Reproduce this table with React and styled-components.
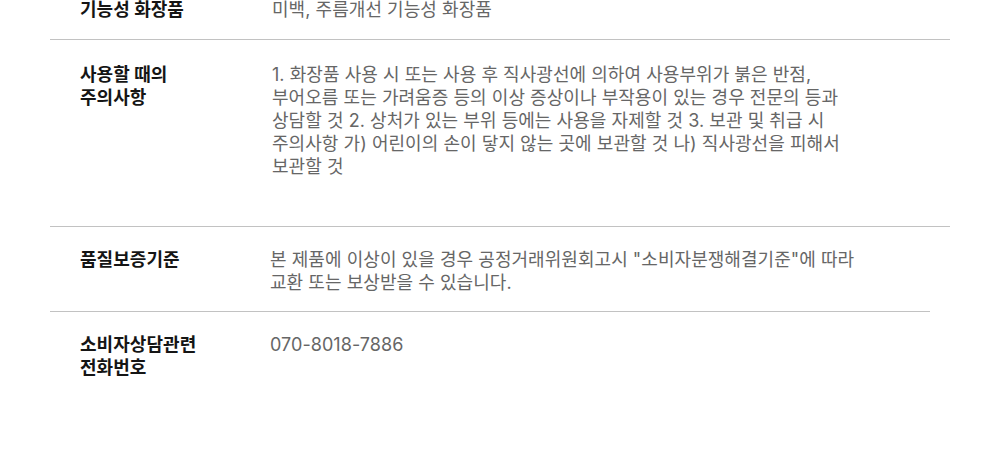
import React from 'react';
import styled, { createGlobalStyle } from 'styled-components';

const GlobalStyle = createGlobalStyle`
  html, body {
    margin: 0;
    padding: 0;
    background: #fff;
    overflow: hidden;
  }
  body {
    font-family: Inter, "Noto Sans CJK KR", "Noto Sans", sans-serif;
  }
`;

const Page = styled.div`
  width: 1000px;
  height: 466px;
  overflow: hidden;
`;

const InfoTable = styled.div`
  margin: -23px 50px 0;
  display: flex;
  flex-direction: column;
`;

const Row = styled.div`
  display: grid;
  grid-template-columns: ${(p) => p.$labelWidth}px 1fr;
  padding: ${(p) => p.$padTop}px 0 ${(p) => p.$padBottom}px 30px;
  margin-right: ${(p) => p.$inset}px;
  border-bottom: ${(p) => (p.$last ? 'none' : '1px solid #c2c2c2')};
  font-size: 18px;
  line-height: 23px;
  letter-spacing: 0.05px;
`;

const Label = styled.div`
  color: #151515;
  font-weight: 700;
`;

const Value = styled.div`
  color: #666;
  font-weight: 400;
  max-width: 605px;
  word-break: keep-all;
`;

const rows = [
  {
    label: ['기능성 화장품'],
    value: '미백, 주름개선 기능성 화장품',
    labelWidth: 192,
    padTop: 21,
    padBottom: 18,
  },
  {
    label: ['사용할 때의', '주의사항'],
    value:
      '1. 화장품 사용 시 또는 사용 후 직사광선에 의하여 사용부위가 붉은 반점, 부어오름 또는 가려움증 등의 이상 증상이나 부작용이 있는 경우 전문의 등과 상담할 것 2. 상처가 있는 부위 등에는 사용을 자제할 것 3. 보관 및 취급 시 주의사항 가) 어린이의 손이 닿지 않는 곳에 보관할 것 나) 직사광선을 피해서 보관할 것',
    labelWidth: 192,
    padTop: 23,
    padBottom: 48,
  },
  {
    label: ['품질보증기준'],
    value:
      '본 제품에 이상이 있을 경우 공정거래위원회고시 "소비자분쟁해결기준"에 따라 교환 또는 보상받을 수 있습니다.',
    labelWidth: 190,
    padTop: 21,
    padBottom: 17,
    inset: 20,
  },
  {
    label: ['소비자상담관련', '전화번호'],
    value: '070-8018-7886',
    labelWidth: 190,
    padTop: 21,
    padBottom: 18,
    last: true,
  },
];

const App = () => (
  <Page>
    <GlobalStyle />
    <InfoTable>
      {rows.map((row) => (
        <Row
          key={row.label.join('')}
          $labelWidth={row.labelWidth}
          $padTop={row.padTop}
          $padBottom={row.padBottom}
          $inset={row.inset || 0}
          $last={row.last}
        >
          <Label>
            {row.label.map((line, i) => (
              <React.Fragment key={line}>
                {i > 0 && <br />}
                {line}
              </React.Fragment>
            ))}
          </Label>
          <Value>{row.value}</Value>
        </Row>
      ))}
    </InfoTable>
  </Page>
);

export default App;
